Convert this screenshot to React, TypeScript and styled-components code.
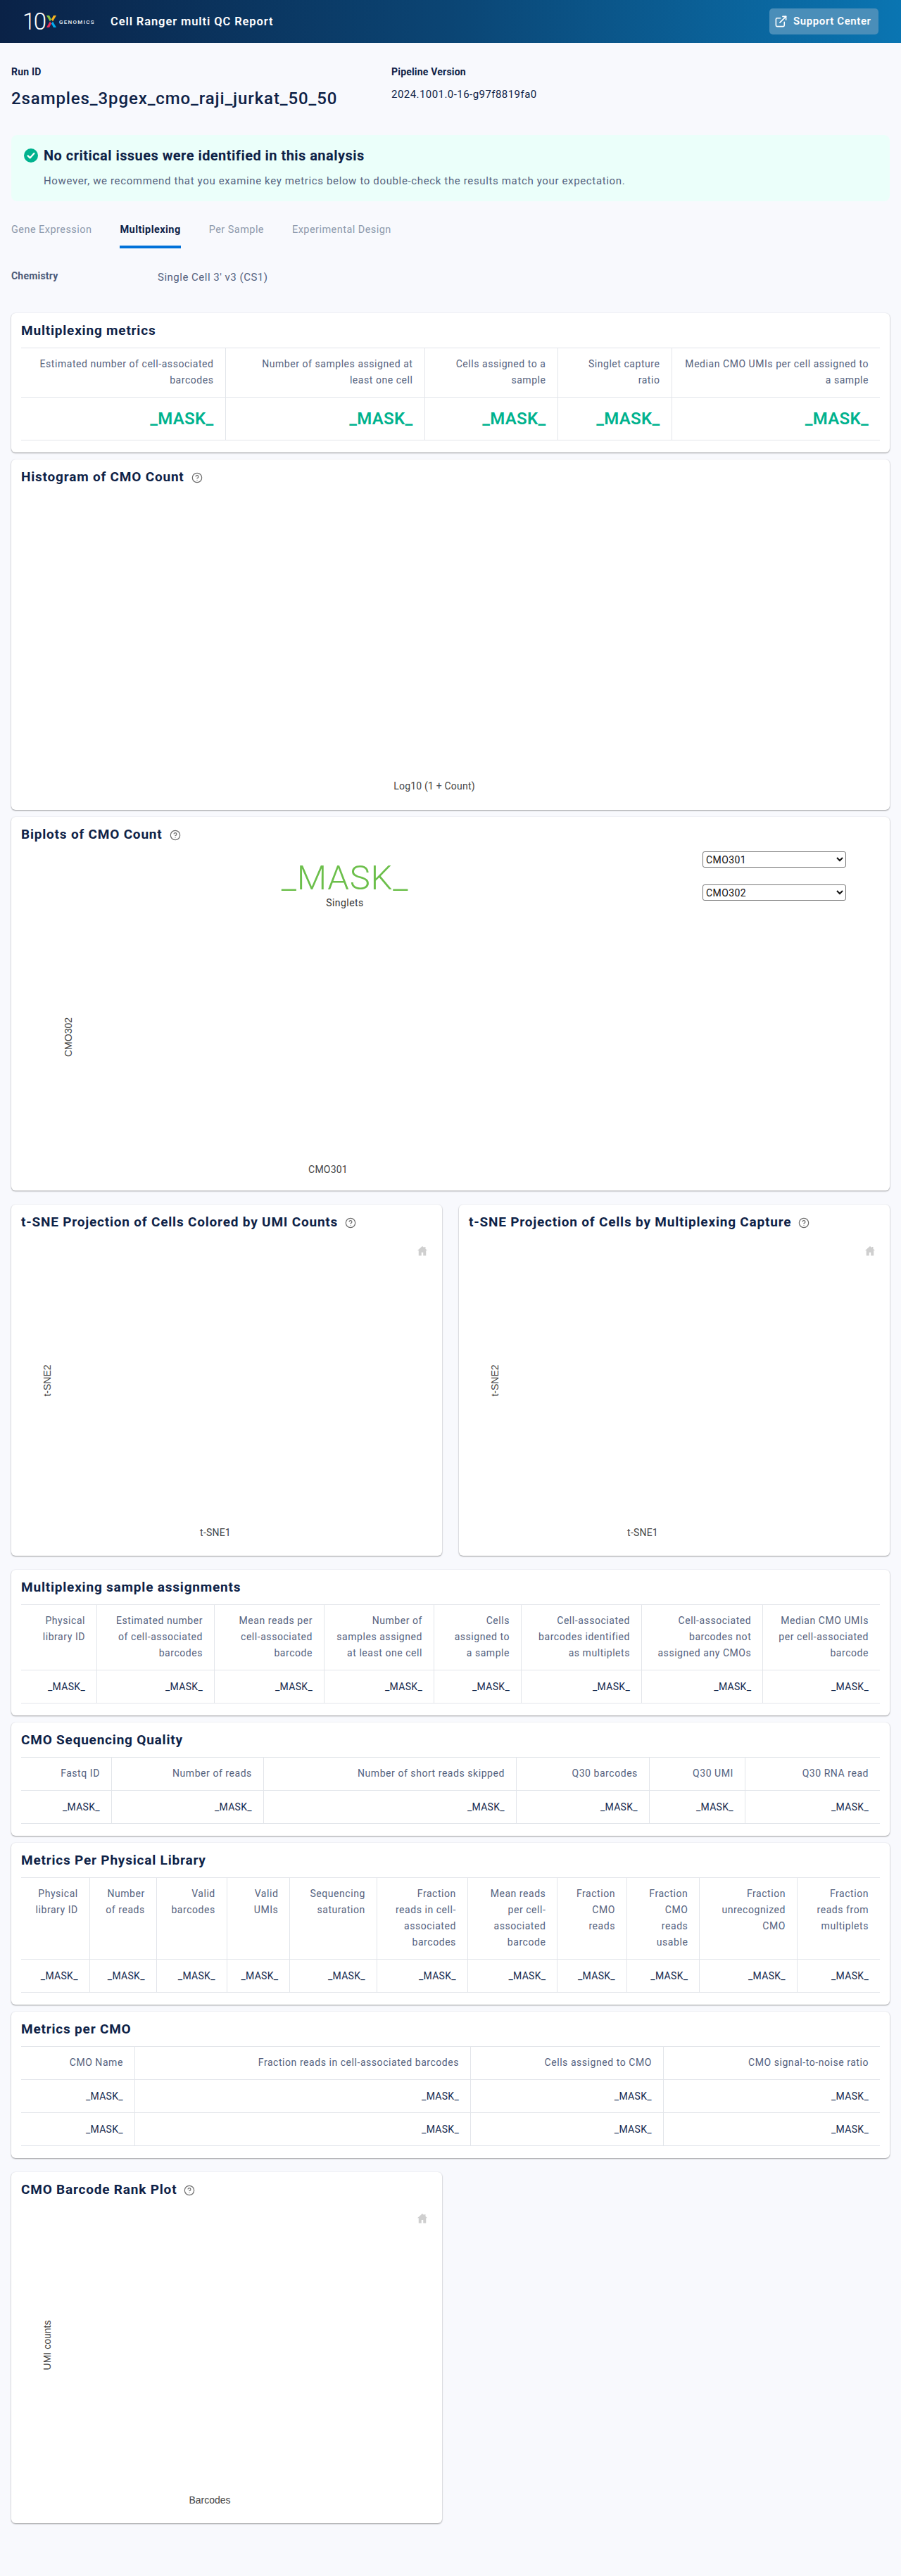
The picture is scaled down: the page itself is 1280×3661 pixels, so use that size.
import React from 'react';
import styled, { createGlobalStyle } from 'styled-components';
import { CircleHelp, ExternalLink } from 'lucide-react';

const Global = createGlobalStyle`
  html, body { margin: 0; padding: 0; background: #f8f9fd; }
  body { font-family: Roboto, "Liberation Sans", sans-serif; font-size: 14px; color: #0e2247; letter-spacing: .45px; }
  * { box-sizing: border-box; }
`;

const Header = styled.header`
  height: 61px; display: flex; align-items: center; justify-content: space-between;
  padding: 0 32px; background: linear-gradient(90deg, #0a2247 0%, #0b4574 50%, #0a75b2 100%);
`;
const Brand = styled.div`display: flex; align-items: center;`;
const Logo = styled.div`display: flex; align-items: center; width: 125px; color: #fff;`;
const LogoTen = styled.span`font-size: 33px; font-weight: 300; letter-spacing: -2.5px; line-height: 30px; width: 33px;`;
const LogoWord = styled.span`font-size: 8px; font-weight: 500; letter-spacing: 1.3px; margin-left: 3px; padding-top: 2px; color: #e6edf3;`;
const ReportTitle = styled.h1`margin: 0; font-size: 16.5px; font-weight: 600; color: #fff; letter-spacing: .9px;`;
const SupportButton = styled.a`
  width: 155px; height: 37px; margin-top: -1px; display: flex; align-items: center; gap: 8px; padding-left: 7px;
  border-radius: 5px; background: #4a8eb9; color: #fff; font-weight: 600; font-size: 15px; letter-spacing: .6px;
`;
const Main = styled.main`padding: 0 16px 74px;`;
const Meta = styled.section`display: grid; grid-template-columns: 540px 1fr; padding-top: 31px; height: 131px;`;
const MetaLabel = styled.div`font-size: 14px; font-weight: 700; line-height: 20px; letter-spacing: .2px;`;
const RunName = styled.div`font-size: 24px; font-weight: 500; line-height: 36px; margin-top: 10px; letter-spacing: .9px;`;
const Version = styled.div`font-size: 15px; line-height: 23px; margin-top: 11px; letter-spacing: .45px;`;
const Notice = styled.section`height: 94px; padding: 15px 18px; background: #ebfffa; border-radius: 8px;`;
const NoticeHead = styled.div`display: flex; align-items: center; gap: 8px; height: 28px;`;
const NoticeTitle = styled.h2`margin: 0; font-size: 20px; font-weight: 700; letter-spacing: .46px;`;
const NoticeText = styled.p`margin: 11px 0 0 28px; line-height: 23px; color: #55627e; font-size: 15px; letter-spacing: .64px;`;
const Tabs = styled.nav`display: flex; gap: 40px; margin-top: 29px;`;
const Tab = styled.div<{ $active?: boolean }>`
  font-size: 14.5px; letter-spacing: .45px; line-height: 23px; padding-bottom: 11px; border-bottom: 4px solid ${p => (p.$active ? '#0071d9' : 'transparent')};
  color: ${p => (p.$active ? '#0e2247' : '#8d99ac')}; font-weight: ${p => (p.$active ? 700 : 400)};
`;
const Chemistry = styled.div`display: flex; margin: 28px 0 41px; line-height: 23px; height: 23px;`;
const ChemLabel = styled.div`width: 208px; font-weight: 700; color: #4b5a77; letter-spacing: .2px;`;
const ChemValue = styled.div`color: #55627e; padding-top: 2px; font-size: 15px; letter-spacing: .5px;`;
const Stack = styled.div<{ $after?: number }>`display: flex; flex-direction: column; gap: 10px; margin-bottom: ${p => p.$after ?? 0}px;`;
const Card = styled.section<{ $half?: boolean }>`
  background: #fff; border-radius: 6px; padding: 0 14px 17px;
  box-shadow: 0 1px 2px rgba(0,0,0,.38), 0 0 2px rgba(30,40,80,.07);
  ${p => (p.$half ? 'width: 612px;' : '')}
`;
const PlotCard = styled(Card)`padding: 0; `;
const BiplotCard = styled(Card)`padding-bottom: 0;`;
const TitleRow = styled.div<{ $inset?: boolean }>`
  height: 49px; display: flex; align-items: center; gap: 10px; padding-left: ${p => (p.$inset ? 14 : 0)}px;
  svg { color: #6c6c6c; margin-top: 3px; }
`;
const CardTitle = styled.h3`margin: 0; font-size: 19px; font-weight: 700; letter-spacing: .8px; line-height: 24px;`;
const Table = styled.table`width: 1220px; table-layout: fixed; border-collapse: collapse; border-top: 1px solid #e2e5ea;`;
const Th = styled.th`
  padding: 11px 16px 12px; font-weight: 400; line-height: 23px; color: #55627e; text-align: right; vertical-align: top; letter-spacing: .55px;
  white-space: pre; border-right: 1px solid #e2e5ea; border-bottom: 1px solid #e2e5ea; &:last-child { border-right: 0; }
`;
const Td = styled.td<{ $big?: boolean }>`
  padding: ${p => (p.$big ? '12px' : '12px 16px 11px')} 16px; line-height: ${p => (p.$big ? 36 : 23)}px; text-align: right; white-space: nowrap;
  font-size: ${p => (p.$big ? 24 : 14)}px; font-weight: ${p => (p.$big ? 600 : 400)};
  color: ${p => (p.$big ? '#00b28e' : '#152a4e')}; letter-spacing: .3px;
  border-right: 1px solid #e2e5ea; border-bottom: 1px solid #e2e5ea; &:last-child { border-right: 0; }
`;
const Col = styled.col<{ $w: number }>`width: ${p => p.$w}px;`;
const AxisLabel = styled.text<{ $arial?: boolean }>`
  font-family: ${p => (p.$arial ? '"Liberation Sans", Arial, sans-serif' : 'Roboto, sans-serif')};
  font-size: 14px; letter-spacing: ${p => (p.$arial ? 0 : '.2px')}; fill: #444; text-anchor: middle; dominant-baseline: middle;
`;
const PlotSvg = styled.svg`display: block; width: 100%;`;
const PlotRow = styled.div`display: flex; justify-content: space-between; margin-bottom: 20px;`;
const BiplotBody = styled.div`display: grid; grid-template-columns: 920px 1fr;`;
const Stat = styled.div`display: flex; flex-direction: column; align-items: center; padding-top: 8px;`;
const StatValue = styled.div`font-size: 49px; font-weight: 300; line-height: 60px; color: #6cbf4b; letter-spacing: .8px;`;
const StatLabel = styled.div`line-height: 20px; margin-top: -5px; color: #333; `;
const Selects = styled.div`display: flex; flex-direction: column; gap: 24px; padding-left: 48px;`;
const Select = styled.select`width: 204px; height: 23px; font: 14px Roboto, sans-serif; letter-spacing: .4px; color: #111; background: #fff; border: 1px solid #767676; border-radius: 3px;`;

const M = '_MASK_';
function DataTable({ cols, heads, rows, big }: { cols: number[]; heads: string[]; rows: number; big?: boolean }) {
  return (
    <Table>
      <colgroup>{cols.map((c, i) => <Col key={i} $w={c} />)}</colgroup>
      <thead><tr>{heads.map((h, i) => <Th key={i}>{h}</Th>)}</tr></thead>
      <tbody>
        {Array.from({ length: rows }, (_, r) => (
          <tr key={r}>{heads.map((_, i) => <Td key={i} $big={big}>{M}</Td>)}</tr>
        ))}
      </tbody>
    </Table>
  );
}
const Help = () => <CircleHelp size={16} strokeWidth={1.8} />;
const Home = ({ x, y }: { x: number; y: number }) => (
  <path transform={`translate(${x - 7} ${y - 6}) scale(.0156)`} fill="#cfcfcf"
    d="M448 0L0 400h112v472h256V576h160v296h256V400h112L736 240V64h-112v76z" />
);
const CheckBadge = () => (
  <svg width="20" height="20" viewBox="0 0 20 20"><circle cx="10" cy="10" r="10" fill="#00b28e" /><path d="M5.6 10.4l3 3 5.8-6.4" fill="none" stroke="#fff" strokeWidth="2.2" strokeLinecap="round" strokeLinejoin="round" /></svg>
);
const LogoMark = styled.svg`flex: none;`;
const LogoX = () => (
  <LogoMark width="16" height="17" viewBox="0 0 16 17">
    <path d="M1 0h4l3 5.5L6 8.5z" fill="#8cc63f" /><path d="M15 0h-4L8 5.5l2 3z" fill="#f7b21d" />
    <path d="M1 17h4l3-5.5-2-3z" fill="#ed2f5b" /><path d="M15 17h-4L8 11.5l2-3z" fill="#00aeef" />
  </LogoMark>
);

export default function App() {
  return (
    <>
      <Global />
      <Header>
        <Brand>
          <Logo><LogoTen>10</LogoTen><LogoX /><LogoWord>GENOMICS</LogoWord></Logo>
          <ReportTitle>Cell Ranger multi QC Report</ReportTitle>
        </Brand>
        <SupportButton><ExternalLink size={19} strokeWidth={2} />Support Center</SupportButton>
      </Header>
      <Main>
        <Meta>
          <div><MetaLabel>Run ID</MetaLabel><RunName>2samples_3pgex_cmo_raji_jurkat_50_50</RunName></div>
          <div><MetaLabel>Pipeline Version</MetaLabel><Version>2024.1001.0-16-g97f8819fa0</Version></div>
        </Meta>
        <Notice>
          <NoticeHead><CheckBadge /><NoticeTitle>No critical issues were identified in this analysis</NoticeTitle></NoticeHead>
          <NoticeText>However, we recommend that you examine key metrics below to double-check the results match your expectation.</NoticeText>
        </Notice>
        <Tabs>
          <Tab>Gene Expression</Tab><Tab $active>Multiplexing</Tab><Tab>Per Sample</Tab><Tab>Experimental Design</Tab>
        </Tabs>
        <Chemistry><ChemLabel>Chemistry</ChemLabel><ChemValue>Single Cell 3' v3 (CS1)</ChemValue></Chemistry>

        <Stack $after={20}>
          <Card>
            <TitleRow><CardTitle>Multiplexing metrics</CardTitle></TitleRow>
            <DataTable big rows={1} cols={[290, 283, 189, 162, 296]} heads={[
              'Estimated number of cell-associated\nbarcodes', 'Number of samples assigned at\nleast one cell',
              'Cells assigned to a\nsample', 'Singlet capture\nratio', 'Median CMO UMIs per cell assigned to\na sample']} />
          </Card>
          <PlotCard>
            <TitleRow $inset><CardTitle>Histogram of CMO Count</CardTitle><Help /></TitleRow>
            <PlotSvg height={449}><AxisLabel x={601} y={416}>Log10 (1 + Count)</AxisLabel></PlotSvg>
          </PlotCard>
          <BiplotCard>
            <TitleRow><CardTitle>Biplots of CMO Count</CardTitle><Help /></TitleRow>
            <BiplotBody>
              <div>
                <Stat><StatValue>{M}</StatValue><StatLabel>Singlets</StatLabel></Stat>
                <PlotSvg height={399}>
                  <AxisLabel $arial x={68} y={181} transform="rotate(-90 68 181)">CMO302</AxisLabel>
                  <AxisLabel x={436} y={370}>CMO301</AxisLabel>
                </PlotSvg>
              </div>
              <Selects>
                <Select defaultValue="CMO301"><option>CMO301</option><option>CMO302</option></Select>
                <Select defaultValue="CMO302"><option>CMO301</option><option>CMO302</option></Select>
              </Selects>
            </BiplotBody>
          </BiplotCard>
        </Stack>

        <PlotRow>
          <PlotCard $half>
            <TitleRow $inset><CardTitle>t-SNE Projection of Cells Colored by UMI Counts</CardTitle><Help /></TitleRow>
            <PlotSvg height={450}>
              <Home x={584} y={16} />
              <AxisLabel $arial x={52} y={201} transform="rotate(-90 52 201)">t-SNE2</AxisLabel>
              <AxisLabel x={290} y={418}>t-SNE1</AxisLabel>
            </PlotSvg>
          </PlotCard>
          <PlotCard $half>
            <TitleRow $inset><CardTitle>t-SNE Projection of Cells by Multiplexing Capture</CardTitle><Help /></TitleRow>
            <PlotSvg height={450}>
              <Home x={584} y={16} />
              <AxisLabel $arial x={52} y={201} transform="rotate(-90 52 201)">t-SNE2</AxisLabel>
              <AxisLabel x={261} y={418}>t-SNE1</AxisLabel>
            </PlotSvg>
          </PlotCard>
        </PlotRow>

        <Stack $after={20}>
          <Card>
            <TitleRow><CardTitle>Multiplexing sample assignments</CardTitle></TitleRow>
            <DataTable rows={1} cols={[107.5, 167, 156, 156, 124, 171, 172.3, 166.2]} heads={[
              'Physical\nlibrary ID', 'Estimated number\nof cell-associated\nbarcodes', 'Mean reads per\ncell-associated\nbarcode',
              'Number of\nsamples assigned\nat least one cell', 'Cells\nassigned to\na sample',
              'Cell-associated\nbarcodes identified\nas multiplets', 'Cell-associated\nbarcodes not\nassigned any CMOs',
              'Median CMO UMIs\nper cell-associated\nbarcode']} />
          </Card>
          <Card>
            <TitleRow><CardTitle>CMO Sequencing Quality</CardTitle></TitleRow>
            <DataTable rows={1} cols={[128.4, 216, 359, 189, 136, 191.6]} heads={[
              'Fastq ID', 'Number of reads', 'Number of short reads skipped', 'Q30 barcodes', 'Q30 UMI', 'Q30 RNA read']} />
          </Card>
          <Card>
            <TitleRow><CardTitle>Metrics Per Physical Library</CardTitle></TitleRow>
            <DataTable rows={1} cols={[97.3, 95, 100, 89.6, 123.5, 129, 127.5, 98.6, 103.4, 138.6, 117.5]} heads={[
              'Physical\nlibrary ID', 'Number\nof reads', 'Valid\nbarcodes', 'Valid\nUMIs', 'Sequencing\nsaturation',
              'Fraction\nreads in cell-\nassociated\nbarcodes', 'Mean reads\nper cell-\nassociated\nbarcode', 'Fraction\nCMO\nreads',
              'Fraction\nCMO\nreads\nusable', 'Fraction\nunrecognized\nCMO', 'Fraction\nreads from\nmultiplets']} />
          </Card>
          <Card>
            <TitleRow><CardTitle>Metrics per CMO</CardTitle></TitleRow>
            <DataTable rows={2} cols={[161.4, 477.2, 273.8, 307.6]} heads={[
              'CMO Name', 'Fraction reads in cell-associated barcodes', 'Cells assigned to CMO', 'CMO signal-to-noise ratio']} />
          </Card>
        </Stack>

        <PlotCard $half>
          <TitleRow $inset><CardTitle>CMO Barcode Rank Plot</CardTitle><Help /></TitleRow>
          <PlotSvg height={450}>
            <Home x={584} y={16} />
            <AxisLabel $arial x={52} y={197} transform="rotate(-90 52 197)">UMI counts</AxisLabel>
            <AxisLabel $arial x={282} y={418}>Barcodes</AxisLabel>
          </PlotSvg>
        </PlotCard>
      </Main>
    </>
  );
}
